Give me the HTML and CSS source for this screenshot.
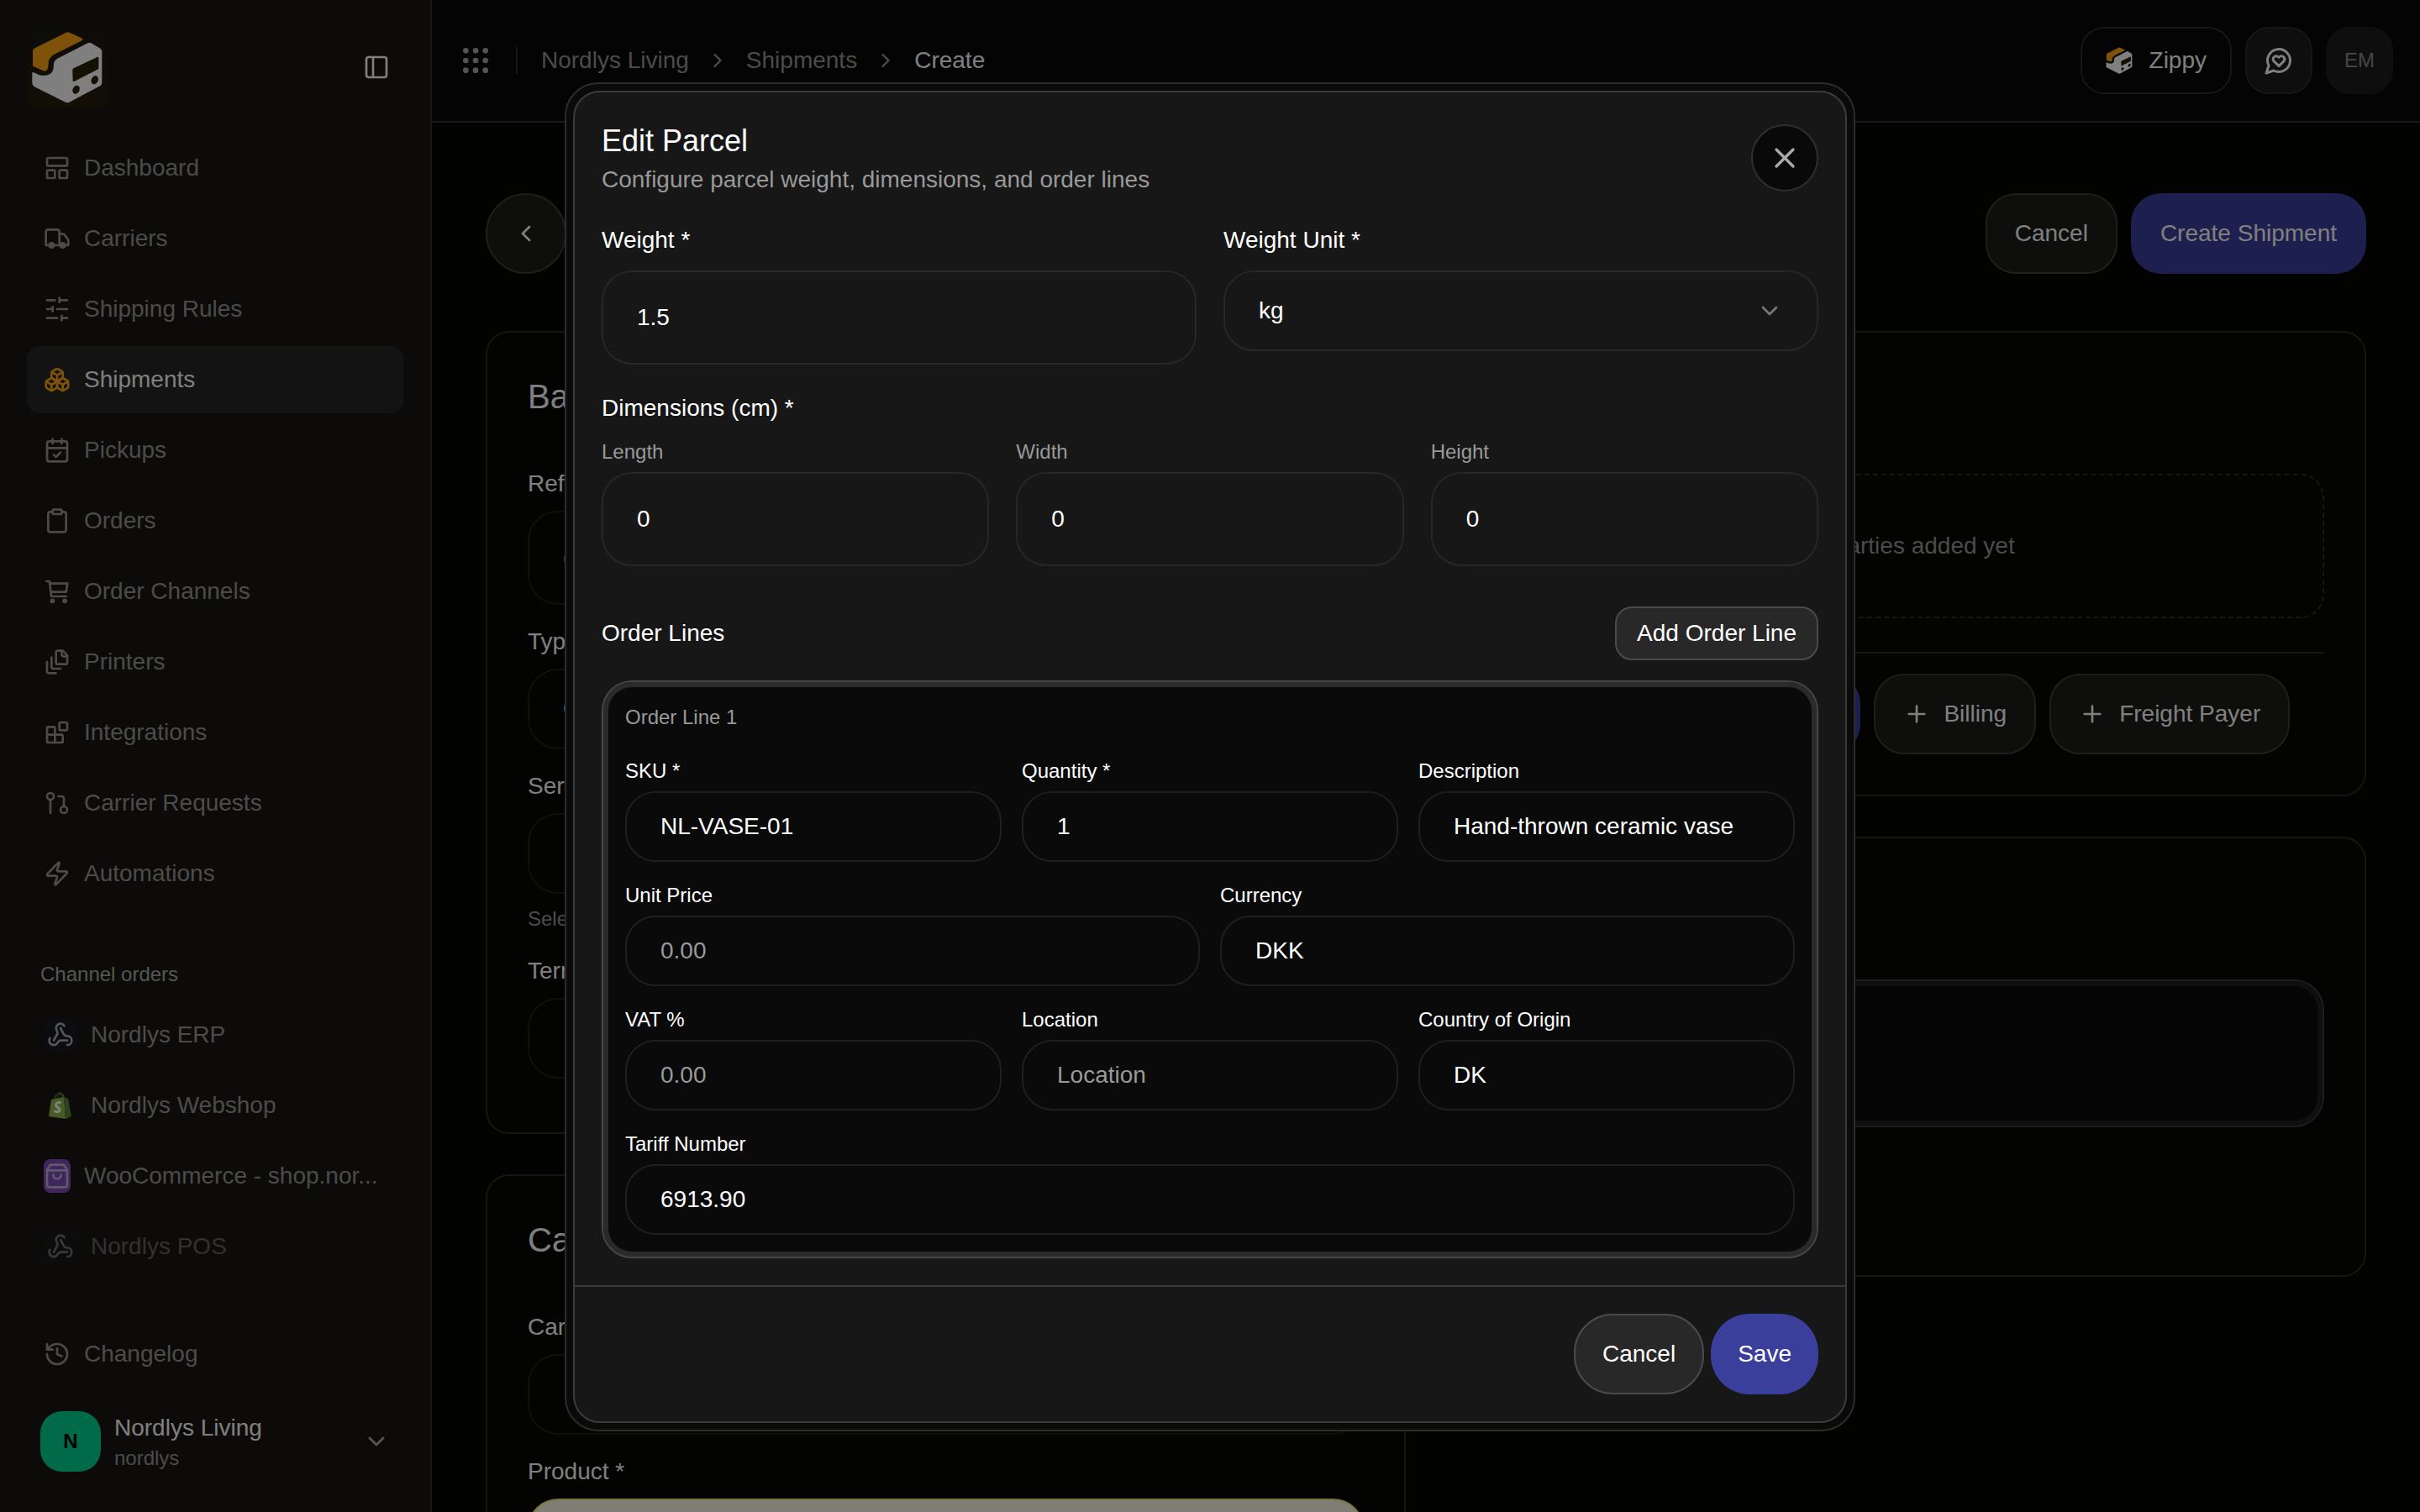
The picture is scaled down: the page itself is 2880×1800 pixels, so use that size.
FILE: index.html
```html
<!DOCTYPE html>
<html lang="en">

<head>
  <meta charset="UTF-8">
  <meta name="viewport" content="width=device-width, initial-scale=1.0">
  <title>Create Shipment</title>
  <link rel="stylesheet" href="styles.css">
</head>

<body>
  <!-- Icon sprite -->
  <svg class="sprite" aria-hidden="true">
    <symbol id="logo" viewBox="54 50 252 260">
      <path fill="#ffa413" d="M56 122Q56 116 62 112L176 55Q183 52 190 56L233 76Q238 80 233 84L133 134Q113 146 112 165V176Q110 196 94 193L56 176Z" />
      <path fill="#fff" d="M54 198Q58 197 78 207Q100 214 118 204Q130 196 131 180V170Q132 155 146 148L254 93Q260 90 266 93L298 112Q305 117 305 124V236Q305 243 298 247L190 305Q182 310 174 306L62 250Q54 245 54 238Z" />
      <path fill="#2a2008" d="M199 190Q199 186 203 184L289 143Q293 142 293 147V182Q293 186 289 188L206 231Q200 233 200 227Z" />
      <ellipse fill="#2a2008" cx="212" cy="261" rx="12" ry="16" transform="rotate(25 212 261)" />
      <ellipse fill="#2a2008" cx="279" cy="226" rx="12" ry="16" transform="rotate(25 279 226)" />
    </symbol>
    <symbol id="panel" viewBox="0 0 24 24">
      <rect width="18" height="18" x="3" y="3" rx="2" />
      <path d="M9 3v18" />
    </symbol>
    <symbol id="dashboard" viewBox="0 0 24 24">
      <rect width="18" height="7" x="3" y="3" rx="1" />
      <rect width="7" height="7" x="3" y="14" rx="1" />
      <rect width="7" height="7" x="14" y="14" rx="1" />
    </symbol>
    <symbol id="truck" viewBox="0 0 24 24">
      <path d="M14 18V6a2 2 0 0 0-2-2H4a2 2 0 0 0-2 2v11a1 1 0 0 0 1 1h2" />
      <path d="M15 18H9" />
      <path d="M19 18h2a1 1 0 0 0 1-1v-3.65a1 1 0 0 0-.22-.624l-3.48-4.35A1 1 0 0 0 17.52 8H14" />
      <circle cx="17" cy="18" r="2" fill="currentColor" />
      <circle cx="7" cy="18" r="2" fill="currentColor" />
    </symbol>
    <symbol id="sliders" viewBox="0 0 24 24">
      <path d="M21 4h-7M10 4H3M21 12h-9M8 12H3M21 20h-5M12 20H3M14 2v4M8 10v4M16 18v4" />
    </symbol>
    <symbol id="boxes" viewBox="0 0 24 24">
      <path d="M2.97 12.92A2 2 0 0 0 2 14.63v3.24a2 2 0 0 0 .97 1.71l3 1.8a2 2 0 0 0 2.06 0L12 19v-5.5l-5-3-4.03 2.42Z" />
      <path d="m7 16.5-4.74-2.85M7 16.5l5-3M7 16.5v5.17" />
      <path d="M12 13.5V19l3.97 2.38a2 2 0 0 0 2.06 0l3-1.8a2 2 0 0 0 .97-1.71v-3.24a2 2 0 0 0-.97-1.71L17 10.5l-5 3Z" />
      <path d="m17 16.5-5-3M17 16.5l4.74-2.85M17 16.5v5.17" />
      <path d="M7.97 4.42A2 2 0 0 0 7 6.13v4.37l5 3 5-3V6.13a2 2 0 0 0-.97-1.71l-3-1.8a2 2 0 0 0-2.06 0l-3 1.8Z" />
      <path d="M12 8 7.26 5.15M12 8l4.74-2.85M12 13.5V8" />
    </symbol>
    <symbol id="calendar" viewBox="0 0 24 24">
      <path d="M8 2v4M16 2v4M3 10h18" />
      <rect width="18" height="18" x="3" y="4" rx="2" />
      <path d="m9 16 2 2 4-4" />
    </symbol>
    <symbol id="clipboard" viewBox="0 0 24 24">
      <rect width="8" height="4" x="8" y="2" rx="1" />
      <path d="M16 4h2a2 2 0 0 1 2 2v14a2 2 0 0 1-2 2H6a2 2 0 0 1-2-2V6a2 2 0 0 1 2-2h2" />
    </symbol>
    <symbol id="cart" viewBox="0 0 24 24">
      <path d="M2.5 3h2.7l1.6 13.5h13.4M5.5 5h15.7l-1.2 7.5H6.4" />
      <circle cx="7.8" cy="20.5" r="1.2" fill="currentColor" />
      <circle cx="18.8" cy="20.5" r="1.2" fill="currentColor" />
    </symbol>
    <symbol id="files" viewBox="0 0 24 24">
      <path d="M21 7h-3a2 2 0 0 1-2-2V2" />
      <path d="M21 6v6.5c0 .8-.7 1.5-1.5 1.5h-7c-.8 0-1.5-.7-1.5-1.5v-9c0-.8.7-1.5 1.5-1.5H17Z" />
      <path d="M7 8v8.8c0 .3.2.6.4.8.2.2.5.4.8.4H15" />
      <path d="M3 12v8.8c0 .3.2.6.4.8.2.2.5.4.8.4H11" />
    </symbol>
    <symbol id="blocks" viewBox="0 0 24 24">
      <rect width="7" height="7" x="14" y="3" rx="1" />
      <path d="M10 21V8a1 1 0 0 0-1-1H4a1 1 0 0 0-1 1v12a1 1 0 0 0 1 1h12a1 1 0 0 0 1-1v-5a1 1 0 0 0-1-1H3" />
    </symbol>
    <symbol id="requests" viewBox="0 0 24 24">
      <circle cx="18" cy="18" r="3" />
      <circle cx="6" cy="6" r="3" />
      <path d="M13 6h3a2 2 0 0 1 2 2v7M6 9v12" />
    </symbol>
    <symbol id="zap" viewBox="0 0 24 24">
      <path d="M4 14a1 1 0 0 1-.78-1.63l9.9-10.2a.5.5 0 0 1 .86.46l-1.92 6.02A1 1 0 0 0 13 10h7a1 1 0 0 1 .78 1.63l-9.9 10.2a.5.5 0 0 1-.86-.46l1.92-6.02A1 1 0 0 0 11 14z" />
    </symbol>
    <symbol id="webhook" viewBox="0 0 24 24">
      <path d="M18 16.98h-5.99c-1.1 0-1.95.94-2.48 1.9A4 4 0 0 1 2 17c.01-.7.2-1.4.57-2" />
      <path d="m6 17 3.13-5.78c.53-.97.1-2.18-.5-3.1a4 4 0 1 1 6.89-4.06" />
      <path d="m12 6 3.13 5.73C15.66 12.7 16.9 13 18 13a4 4 0 0 1 0 8" />
    </symbol>
    <symbol id="shopify" viewBox="0 0 32 32">
      <path fill="none" stroke="#8db849" stroke-width="1" d="M9 8C10 4 13 1 15 1s3 3 3 6M12 8c1-4 3-6 5-6s3 3 3 5" />
      <path fill="#8db849" d="M5 9l15-3 2 26L2 29z" />
      <path fill="#5a863e" d="M20 6l5 2 4 21-7 3z" />
      <path fill="none" stroke="#fff" stroke-width="3" d="M16.500 13c-3-1.500-6 0-6 2.500s4.500 3 4.500 5.500-3 3.500-6.500 1.500" />
    </symbol>
    <symbol id="bag" viewBox="0 0 24 24">
      <path d="M6 2h12l3 4.500V20a2 2 0 0 1-2 2H5a2 2 0 0 1-2-2V6.500zM3 7h18M15.500 11a3.500 3.500 0 0 1-7 0" />
    </symbol>
    <symbol id="history" viewBox="0 0 24 24">
      <path d="M3 12a9 9 0 1 0 9-9 9.750 9.750 0 0 0-6.740 2.740L3 8" />
      <path d="M3 3v5h5M12 7v5l4 2" />
    </symbol>
    <symbol id="grip" viewBox="0 0 24 24">
      <g fill="currentColor">
        <circle cx="5" cy="5" r="1" /><circle cx="12" cy="5" r="1" /><circle cx="19" cy="5" r="1" />
        <circle cx="5" cy="12" r="1" /><circle cx="12" cy="12" r="1" /><circle cx="19" cy="12" r="1" />
        <circle cx="5" cy="19" r="1" /><circle cx="12" cy="19" r="1" /><circle cx="19" cy="19" r="1" />
      </g>
    </symbol>
    <symbol id="chat-heart" viewBox="0 0 24 24">
      <path d="M7.900 20A9 9 0 1 0 4 16.100L2 22Z" />
      <path d="M15.800 9.200a2.500 2.500 0 0 0-3.500 0l-.3.4-.35-.3a2.420 2.420 0 1 0-3.200 3.600l3.600 3.500 3.600-3.500c1.200-1.200 1.100-2.700.2-3.700" />
    </symbol>
    <symbol id="chevron-right" viewBox="0 0 24 24"><path d="m9 18 6-6-6-6" /></symbol>
    <symbol id="chevron-left" viewBox="0 0 24 24"><path d="m15 18-6-6 6-6" /></symbol>
    <symbol id="chevron-down" viewBox="0 0 24 24"><path d="m6 9 6 6 6-6" /></symbol>
    <symbol id="plus" viewBox="0 0 24 24"><path d="M5 12h14M12 5v14" /></symbol>
    <symbol id="close" viewBox="0 0 24 24"><path d="M18 6 6 18M6 6l12 12" /></symbol>
  </svg>

  <div class="app">
    <aside class="sidebar">
      <div class="sidebar-top">
        <a class="logo" href="#" aria-label="Home"><svg><use href="#logo" /></svg></a>
        <button class="icon-button" aria-label="Toggle sidebar"><svg class="icon"><use href="#panel" /></svg></button>
      </div>
      <nav class="nav">
        <a class="nav-item" href="#"><svg class="icon"><use href="#dashboard" /></svg>Dashboard</a>
        <a class="nav-item" href="#"><svg class="icon"><use href="#truck" /></svg>Carriers</a>
        <a class="nav-item" href="#"><svg class="icon"><use href="#sliders" /></svg>Shipping Rules</a>
        <a class="nav-item active" href="#"><svg class="icon"><use href="#boxes" /></svg>Shipments</a>
        <a class="nav-item" href="#"><svg class="icon"><use href="#calendar" /></svg>Pickups</a>
        <a class="nav-item" href="#"><svg class="icon"><use href="#clipboard" /></svg>Orders</a>
        <a class="nav-item" href="#"><svg class="icon"><use href="#cart" /></svg>Order Channels</a>
        <a class="nav-item" href="#"><svg class="icon"><use href="#files" /></svg>Printers</a>
        <a class="nav-item" href="#"><svg class="icon"><use href="#blocks" /></svg>Integrations</a>
        <a class="nav-item" href="#"><svg class="icon"><use href="#requests" /></svg>Carrier Requests</a>
        <a class="nav-item" href="#"><svg class="icon"><use href="#zap" /></svg>Automations</a>
      </nav>
      <h2 class="nav-title">Channel orders</h2>
      <nav class="nav">
        <a class="nav-item" href="#"><span class="tile"><svg class="icon"><use href="#webhook" /></svg></span>Nordlys ERP</a>
        <a class="nav-item" href="#"><span class="tile tile-plain"><svg class="icon"><use href="#shopify" /></svg></span>Nordlys Webshop</a>
        <a class="nav-item" href="#"><span class="tile tile-woo"><svg class="icon"><use href="#bag" /></svg></span>WooCommerce - shop.nor...</a>
        <a class="nav-item muted" href="#"><span class="tile"><svg class="icon"><use href="#webhook" /></svg></span>Nordlys POS</a>
      </nav>
      <div class="sidebar-bottom">
        <a class="nav-item" href="#"><svg class="icon"><use href="#history" /></svg>Changelog</a>
        <button class="workspace">
          <span class="avatar">N</span>
          <span class="workspace-text">
            <span class="workspace-name">Nordlys Living</span>
            <span class="workspace-slug">nordlys</span>
          </span>
          <svg class="icon"><use href="#chevron-down" /></svg>
        </button>
      </div>
    </aside>

    <div class="content">
      <header class="topbar">
        <button class="icon-button grip" aria-label="Apps"><svg class="icon icon-lg"><use href="#grip" /></svg></button>
        <nav class="breadcrumbs" aria-label="Breadcrumb">
          <a href="#">Nordlys Living</a>
          <svg class="icon icon-sm"><use href="#chevron-right" /></svg>
          <a href="#">Shipments</a>
          <svg class="icon icon-sm"><use href="#chevron-right" /></svg>
          <span class="here">Create</span>
        </nav>
        <div class="topbar-actions">
          <button class="top-button zippy"><svg class="icon"><use href="#logo" /></svg>Zippy</button>
          <button class="top-button square" aria-label="Feedback"><svg class="icon icon-md"><use href="#chat-heart" /></svg></button>
          <button class="top-button square user">EM</button>
        </div>
      </header>

      <main class="main">
        <div class="page-head">
          <button class="back" aria-label="Back"><svg class="icon"><use href="#chevron-left" /></svg></button>
          <div class="page-actions">
            <button class="btn btn-secondary">Cancel</button>
            <button class="btn btn-primary">Create Shipment</button>
          </div>
        </div>

        <div class="columns">
          <div class="column">
            <section class="card">
              <h2>Basic</h2>
              <div class="card-fields">
                <div class="field">
                  <label for="reference">Reference</label>
                  <input class="input input-tall" id="reference" type="text" placeholder="optional">
                </div>
                <div class="field">
                  <label for="type">Type *</label>
                  <select class="input" id="type"><option>Outbound</option></select>
                </div>
                <div class="field">
                  <label for="service">Service</label>
                  <select class="input" id="service"><option></option></select>
                  <p class="hint">Select a carrier first</p>
                </div>
                <div class="field terms">
                  <label for="terms">Terms</label>
                  <select class="input" id="terms"><option></option></select>
                </div>
              </div>
            </section>
            <section class="card">
              <h2>Carrier</h2>
              <div class="card-fields">
                <div class="field">
                  <label for="carrier">Carrier *</label>
                  <select class="input" id="carrier"><option></option></select>
                </div>
                <div class="field">
                  <label for="product">Product *</label>
                  <input class="input input-warning" id="product" type="text">
                </div>
              </div>
            </section>
          </div>

          <div class="column">
            <section class="card">
              <h2>Parties</h2>
              <div class="card-body">
                <div class="empty">No parties added yet</div>
                <div class="party-buttons">
                  <button class="btn btn-primary"><svg class="icon"><use href="#plus" /></svg>Sender</button>
                  <button class="btn btn-primary"><svg class="icon"><use href="#plus" /></svg>Delivery</button>
                  <button class="btn btn-secondary"><svg class="icon"><use href="#plus" /></svg>Billing</button>
                  <button class="btn btn-secondary"><svg class="icon"><use href="#plus" /></svg>Freight Payer</button>
                </div>
              </div>
            </section>
            <section class="card">
              <h2>Parcels</h2>
              <div class="card-body">
                <div class="inset parcel"></div>
                <div class="parcel-buttons"><button class="btn btn-secondary">Add Parcel</button></div>
              </div>
            </section>
          </div>
        </div>
      </main>
    </div>
  </div>

  <!-- Edit parcel dialog -->
  <div class="overlay">
    <div class="modal" role="dialog" aria-modal="true" aria-labelledby="modal-title">
      <form class="modal-inner">
        <div class="modal-body">
          <div class="modal-head">
            <div>
              <h1 id="modal-title">Edit Parcel</h1>
              <p>Configure parcel weight, dimensions, and order lines</p>
            </div>
            <button class="close" type="button" aria-label="Close"><svg class="icon icon-lg"><use href="#close" /></svg></button>
          </div>

          <div class="grid cols-2">
            <div class="field roomy">
              <label for="weight">Weight *</label>
              <input class="input input-tall" id="weight" type="text" value="1.5">
            </div>
            <div class="field roomy">
              <label for="unit">Weight Unit *</label>
              <div class="select">
                <select class="input" id="unit"><option>kg</option><option>lb</option></select>
                <svg class="icon"><use href="#chevron-down" /></svg>
              </div>
            </div>
          </div>

          <fieldset class="dimensions">
            <legend>Dimensions (cm) *</legend>
            <div class="grid cols-3">
              <div class="field small dim">
                <label for="length">Length</label>
                <input class="input input-tall" id="length" type="text" value="0">
              </div>
              <div class="field small dim">
                <label for="width">Width</label>
                <input class="input input-tall" id="width" type="text" value="0">
              </div>
              <div class="field small dim">
                <label for="height">Height</label>
                <input class="input input-tall" id="height" type="text" value="0">
              </div>
            </div>
          </fieldset>

          <div class="lines-head">
            <h2>Order Lines</h2>
            <button class="btn btn-secondary btn-small" type="button">Add Order Line</button>
          </div>

          <div class="inset order-line">
            <h3>Order Line 1</h3>
            <div class="grid cols-3 tight">
              <div class="field small">
                <label for="sku">SKU *</label>
                <input class="input input-short" id="sku" type="text" value="NL-VASE-01">
              </div>
              <div class="field small">
                <label for="quantity">Quantity *</label>
                <input class="input input-short" id="quantity" type="text" value="1">
              </div>
              <div class="field small">
                <label for="description">Description</label>
                <input class="input input-short" id="description" type="text" value="Hand-thrown ceramic vase">
              </div>
            </div>
            <div class="grid cols-2 tight">
              <div class="field small">
                <label for="price">Unit Price</label>
                <input class="input input-short" id="price" type="text" placeholder="0.00">
              </div>
              <div class="field small">
                <label for="currency">Currency</label>
                <input class="input input-short" id="currency" type="text" value="DKK">
              </div>
            </div>
            <div class="grid cols-3 tight">
              <div class="field small">
                <label for="vat">VAT %</label>
                <input class="input input-short" id="vat" type="text" placeholder="0.00">
              </div>
              <div class="field small">
                <label for="location">Location</label>
                <input class="input input-short" id="location" type="text" placeholder="Location">
              </div>
              <div class="field small">
                <label for="origin">Country of Origin</label>
                <input class="input input-short" id="origin" type="text" value="DK">
              </div>
            </div>
            <div class="field small">
              <label for="tariff">Tariff Number</label>
              <input class="input input-short" id="tariff" type="text" value="6913.90">
            </div>
          </div>
        </div>

        <div class="modal-foot">
          <button class="btn btn-secondary" type="button">Cancel</button>
          <button class="btn btn-primary" type="button">Save</button>
        </div>
      </form>
    </div>
  </div>
</body>

</html>
```
FILE: styles.css
```css
* {
  margin: 0;
  padding: 0;
  box-sizing: border-box;
}

:root {
  --text: #ffffff;
  --muted: #999999;
  --indigo: #3b3f9c;
  --orange: #ffa413;
  --border: #2a2a28;
}

body {
  height: 100vh;
  overflow: hidden;
  background: #050402;
  color: var(--text);
  font-family: "Liberation Sans", Arial, sans-serif;
  font-size: 28px;
  line-height: 40px;
}

button,
input,
select {
  font: inherit;
  color: inherit;
}

button {
  border: none;
  background: none;
  cursor: pointer;
}

a {
  color: inherit;
  text-decoration: none;
}

h1,
h2,
h3 {
  font-weight: 400;
}

.sprite {
  display: none;
}

.icon {
  width: 32px;
  height: 32px;
  flex: none;
  fill: none;
  stroke: currentColor;
  stroke-width: 2;
  stroke-linecap: round;
  stroke-linejoin: round;
}

.icon-sm {
  width: 28px;
  height: 28px;
}

.icon-md {
  width: 36px;
  height: 36px;
}

.icon-lg {
  width: 40px;
  height: 40px;
}

.icon-button {
  display: flex;
}

.app {
  display: flex;
  height: 100vh;
}

/* Sidebar */
.sidebar {
  display: flex;
  flex-direction: column;
  width: 514px;
  flex: none;
  padding: 32px 32px 48px;
  background: #191713;
  border-right: 2px solid #30302e;
}

.sidebar-top {
  display: flex;
  justify-content: space-between;
  align-items: center;
  padding-right: 16px;
  margin-bottom: 32px;
}

.logo {
  display: flex;
  width: 96px;
  height: 96px;
  padding: 5px 6px;
  background: radial-gradient(circle at 50% 80%, #2e2209, #1d1911 65%);
}

.logo svg {
  width: 84px;
  height: 86px;
}

.nav {
  display: flex;
  flex-direction: column;
  gap: 4px;
}

.nav-item {
  display: flex;
  align-items: center;
  gap: 16px;
  height: 80px;
  padding: 0 20px;
  border-radius: 16px;
  color: #969693;
  white-space: nowrap;
}

.nav-item.active {
  background: #262626;
  color: var(--text);
}

.nav-item.active .icon {
  color: var(--orange);
}

.nav-item.muted {
  opacity: 0.6;
}

.nav-title {
  padding: 64px 16px 16px;
  color: #acaca8;
  font-size: 24px;
  line-height: 32px;
}

.tile {
  display: flex;
  align-items: center;
  justify-content: center;
  width: 40px;
  height: 40px;
  border-radius: 8px;
  background: #181a22;
  color: #acaca8;
}

.tile-plain {
  background: none;
}

.tile-plain .icon {
  stroke: none;
  stroke-linecap: butt;
}

.tile-woo {
  width: 32px;
  background: #7c4fb8;
  color: #c4b0dc;
}

.sidebar-bottom {
  display: flex;
  flex-direction: column;
  gap: 28px;
  margin-top: auto;
}

.workspace {
  display: flex;
  align-items: center;
  gap: 16px;
  padding: 0 16px;
  text-align: left;
}

.workspace .icon {
  color: #acaca8;
}

.avatar {
  display: flex;
  align-items: center;
  justify-content: center;
  width: 72px;
  height: 72px;
  border-radius: 26px;
  background: #00d492;
  color: #000;
  font-size: 24px;
  font-weight: 700;
}

.workspace-text {
  display: flex;
  flex: 1;
  flex-direction: column;
}

.workspace-name {
  line-height: 40px;
}

.workspace-slug {
  color: #969693;
  font-size: 24px;
  line-height: 32px;
}

/* Top bar */
.content {
  flex: 1;
  min-width: 0;
  overflow: hidden;
}

.topbar {
  display: flex;
  align-items: center;
  gap: 28px;
  padding: 32px;
  background: #080808;
  border-bottom: 2px solid #343432;
}

.grip {
  color: #a8a8a8;
}

.breadcrumbs {
  display: flex;
  flex: 1;
  align-items: center;
  gap: 20px;
  padding-left: 30px;
  background: linear-gradient(#303030, #303030) left center / 2px 32px no-repeat;
  color: #969693;
}

.here {
  color: var(--text);
}

.topbar-actions {
  display: flex;
  gap: 16px;
}

.top-button {
  display: flex;
  align-items: center;
  justify-content: center;
  gap: 20px;
  height: 80px;
  padding: 0 28px;
  border: 2px solid #2c2c2c;
  border-radius: 28px;
}

.square {
  width: 80px;
  padding: 0;
  background: #1c1c1c;
}

.zippy .icon {
  stroke: none;
}

.user {
  border-color: #1c1c1c;
  color: #8c8c8c;
  font-size: 24px;
}

/* Buttons */
.btn {
  display: flex;
  align-items: center;
  justify-content: center;
  gap: 16px;
  height: 96px;
  padding: 0 35px;
  border-radius: 36px;
  white-space: nowrap;
}

.btn-primary {
  background: var(--indigo);
}

.btn-secondary {
  padding: 0 33px;
  border: 2px solid #3c3c39;
  background: #1c1c1a;
}

.btn-small {
  height: 64px;
  padding: 0 24px;
}

/* Page */
.main {
  padding: 84px 64px;
}

.page-head {
  display: flex;
  justify-content: space-between;
  margin-bottom: 68px;
}

.page-actions {
  display: flex;
  gap: 16px;
}

.back {
  display: flex;
  align-items: center;
  justify-content: center;
  width: 96px;
  height: 96px;
  border: 2px solid #3c3c39;
  border-radius: 50%;
  background: #1c1c1a;
}

.columns {
  display: grid;
  grid-template-columns: 1fr 1fr;
  align-items: start;
  gap: 48px;
}

.column {
  display: grid;
  gap: 48px;
}

.card {
  padding: 48px;
  border: 2px solid var(--border);
  border-radius: 28px;
  background: #070705;
}

.card h2 {
  font-size: 40px;
  line-height: 56px;
}

.card-fields {
  display: grid;
  gap: 24px;
  padding-top: 56px;
}

.card-body {
  padding-top: 64px;
}

.terms {
  padding-bottom: 16px;
}

.hint {
  color: var(--muted);
  font-size: 24px;
  line-height: 36px;
}

.empty {
  padding: 64px;
  border: 2px dashed #2c2c29;
  border-radius: 28px;
  color: #969693;
  text-align: center;
}

.party-buttons {
  display: flex;
  gap: 16px;
  margin-top: 40px;
  padding-top: 24px;
  border-top: 2px solid #2c2c29;
}

.parcel {
  height: 176px;
}

.parcel-buttons {
  display: flex;
  padding-top: 32px;
}

/* Form fields */
.grid {
  display: grid;
  align-items: start;
  gap: 32px;
}

.cols-2 {
  grid-template-columns: repeat(2, 1fr);
}

.cols-3 {
  grid-template-columns: repeat(3, 1fr);
}

.tight {
  gap: 24px;
}

.field {
  display: grid;
  gap: 12px;
}

.roomy {
  gap: 16px;
}

.small {
  gap: 8px;
}

.small label {
  font-size: 24px;
  line-height: 32px;
}

.dim label {
  color: var(--muted);
}

.input {
  width: 100%;
  min-width: 0;
  height: 96px;
  padding: 0 40px;
  border: 2px solid #272727;
  border-radius: 36px;
  outline: none;
  appearance: none;
  background: transparent;
}

.card .input {
  border-color: #1e1e1c;
}

.card .input-warning {
  border-color: #f0ee80;
  background: #fdfdea;
}

.input::placeholder {
  color: var(--muted);
}

.input-tall {
  height: 112px;
}

.input-short {
  height: 84px;
  border-color: #1f1f1f;
}

/* Chevron shares the grid cell with the select */
.select {
  display: grid;
  align-items: center;
}

.select > * {
  grid-area: 1 / 1;
}

.select .icon {
  justify-self: end;
  margin-right: 42px;
  color: #777;
  pointer-events: none;
}

/* Framed box with a double edge */
.inset {
  padding: 20px;
  border: 2px solid #474747;
  border-radius: 36px;
  background: #0a0a0a;
  box-shadow: inset 0 0 0 6px #2a2a2a;
}

.card .inset {
  border-color: #3a3a38;
  box-shadow: inset 0 0 0 6px #1e1e1e;
}

/* Modal */
.overlay {
  position: fixed;
  inset: 0;
  display: flex;
  align-items: center;
  justify-content: center;
  padding-top: 2px;
  background: rgba(0, 0, 0, 0.5);
}

.modal {
  width: 1536px;
  max-width: 100%;
  padding: 8px;
  border: 2px solid #2c2c2c;
  border-radius: 40px;
  background: #0a0a0a;
}

.modal-inner {
  border: 2px solid #3c3c3c;
  border-radius: 32px;
  background: #171717;
}

.modal-body {
  padding: 32px;
}

.modal-head {
  display: flex;
  align-items: center;
  justify-content: space-between;
  margin-bottom: 32px;
}

.modal-head h1 {
  font-size: 36px;
  line-height: 52px;
}

.modal-head p {
  color: var(--muted);
}

.close {
  display: flex;
  align-items: center;
  justify-content: center;
  width: 80px;
  height: 80px;
  border: 2px solid #2e2e2e;
  border-radius: 50%;
  background: #090909;
  color: #aaaaaa;
}

.dimensions {
  margin-top: 32px;
  border: none;
}

.dimensions legend {
  margin-bottom: 16px;
}

.lines-head {
  display: flex;
  align-items: center;
  justify-content: space-between;
  margin: 48px 0 24px;
}

.lines-head h2 {
  font-size: 28px;
}

.order-line {
  display: grid;
  gap: 24px;
  padding: 26px;
}

.order-line h3 {
  margin-bottom: 8px;
  color: var(--muted);
  font-size: 24px;
  line-height: 32px;
}

.modal-foot {
  display: flex;
  justify-content: flex-end;
  gap: 8px;
  padding: 32px;
  border-top: 2px solid #3a3a3a;
}

.modal .btn-secondary {
  border-color: #4a4a4a;
  background: #282828;
}

.modal-foot .btn {
  padding: 0 32px;
  border-radius: 46px;
}

.modal .btn-small {
  border-radius: 20px;
}
```
